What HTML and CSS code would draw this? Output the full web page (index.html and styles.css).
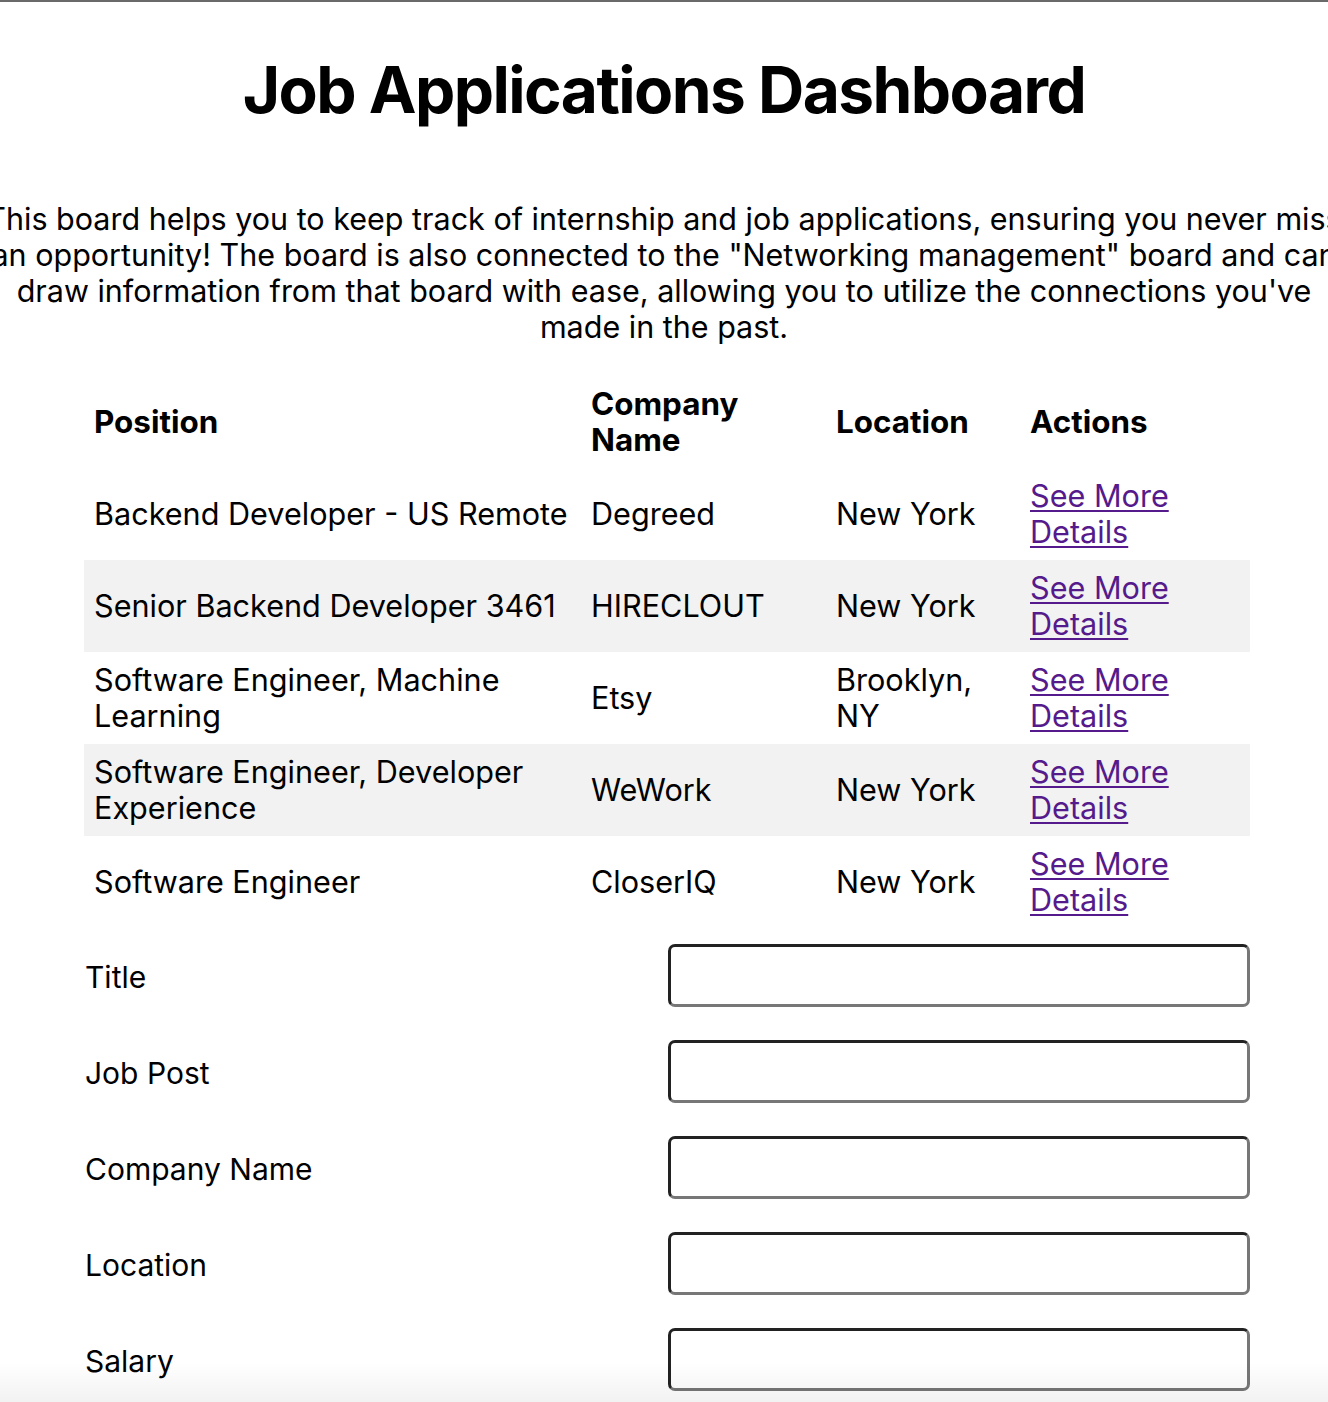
FILE: index.html
```html
<!DOCTYPE html>
<html lang="en">
<head>
<meta charset="utf-8">
<title>Job Applications Dashboard</title>
<link rel="stylesheet" href="styles.css">
</head>
<body>
<div class="page">
  <h1 class="title">Job Applications Dashboard</h1>
  <p class="intro">This board helps you to keep track of internship and job applications, ensuring you never miss<br>an opportunity! The board is also connected to the "Networking management" board and can<br>draw information from that board with ease, allowing you to utilize the connections you've<br>made in the past.</p>

  <table class="jobs">
    <colgroup>
      <col class="c-pos"><col class="c-comp"><col class="c-loc"><col class="c-act">
    </colgroup>
    <thead>
      <tr><th>Position</th><th>Company<br>Name</th><th>Location</th><th>Actions</th></tr>
    </thead>
    <tbody>
      <tr><td>Backend Developer - US Remote</td><td>Degreed</td><td>New York</td><td><a class="more" href="#">See More<br>Details</a></td></tr>
      <tr><td>Senior Backend Developer 3461</td><td>HIRECLOUT</td><td>New York</td><td><a class="more" href="#">See More<br>Details</a></td></tr>
      <tr><td>Software Engineer, Machine<br>Learning</td><td>Etsy</td><td>Brooklyn,<br>NY</td><td><a class="more" href="#">See More<br>Details</a></td></tr>
      <tr><td>Software Engineer, Developer<br>Experience</td><td>WeWork</td><td>New York</td><td><a class="more" href="#">See More<br>Details</a></td></tr>
      <tr><td>Software Engineer</td><td>CloserIQ</td><td>New York</td><td><a class="more" href="#">See More<br>Details</a></td></tr>
    </tbody>
  </table>

  <form class="form">
    <label class="label" for="f-title">Title</label><input class="field" id="f-title" type="text">
    <label class="label" for="f-post">Job Post</label><input class="field" id="f-post" type="text">
    <label class="label" for="f-comp">Company Name</label><input class="field" id="f-comp" type="text">
    <label class="label" for="f-loc">Location</label><input class="field" id="f-loc" type="text">
    <label class="label" for="f-sal">Salary</label><input class="field" id="f-sal" type="text">
  </form>
</div>
<div class="fade"></div>
</body>
</html>
```
FILE: styles.css
```css
html {
  overflow-x: hidden;
}
body {
  margin: 0;
  border-top: 2px solid #6a6a6a;
  background: #fff;
  color: #000;
  font-family: Inter, "Noto Sans", sans-serif;
}
.page {
  width: 1328px;
}
.title {
  margin: 50px 0 0;
  font-size: 64px;
  line-height: 76px;
  font-weight: 700;
  text-align: center;
  letter-spacing: -1.55px;
}
.intro {
  margin: 73px -60px 0;
  font-size: 30.5px;
  line-height: 36px;
  text-align: center;
  white-space: nowrap;
}
.jobs {
  margin: 31px 0 0 84px;
  width: 1166px;
  table-layout: fixed;
  border-collapse: collapse;
  font-size: 30.6px;
  line-height: 36px;
}
.c-pos { width: 497px; }
.c-comp { width: 245px; }
.c-loc { width: 194px; }
.c-act { width: 230px; }
.jobs th,
.jobs td {
  padding: 10px 0 10px 10px;
  text-align: left;
  vertical-align: middle;
  white-space: nowrap;
}
.jobs th {
  font-weight: 700;
  font-size: 31.4px;
  height: 72px;
}
.jobs tbody tr:nth-child(even) {
  background: #f2f2f2;
}
.more {
  color: #551a8b;
  text-decoration: underline;
  text-underline-offset: 3px;
  text-decoration-thickness: 2px;
}
.form {
  margin: 16px 0 0 84px;
  width: 1166px;
  display: grid;
  grid-template-columns: 1fr 582px;
  row-gap: 33px;
  align-items: center;
}
.label {
  font-size: 30px;
  line-height: 36px;
  padding: 3px 0 0 1px;
}
.field {
  box-sizing: border-box;
  height: 63px;
  width: 582px;
  margin: 0;
  border-style: solid;
  border-width: 3px;
  border-color: #222 #777 #777 #222;
  border-radius: 7px;
  background: #fff;
  font-size: 30px;
}
.fade {
  position: fixed;
  left: 0;
  right: 0;
  bottom: 0;
  height: 40px;
  background: linear-gradient(to bottom, rgba(0,0,0,0), rgba(0,0,0,0.05));
  pointer-events: none;
}
```
